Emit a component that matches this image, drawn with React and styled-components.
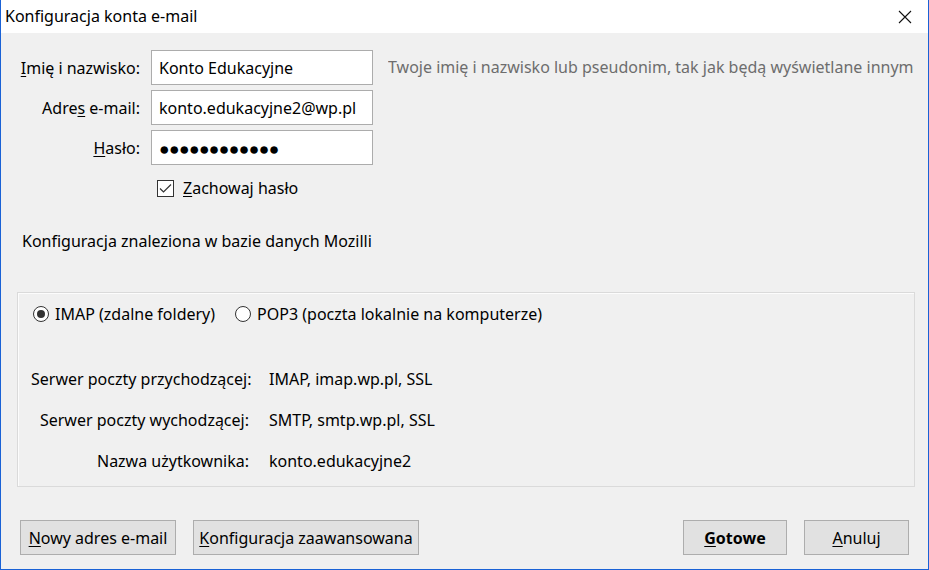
import React from "react";
import styled, { createGlobalStyle } from "styled-components";

const GlobalStyle = createGlobalStyle`
  html, body { margin: 0; padding: 0; background: #f0f0f0; }
  * { box-sizing: border-box; }
`;

const Window = styled.div`
  width: 929px;
  height: 570px;
  display: flex;
  flex-direction: column;
  background: #f0f0f0;
  border: 1px solid #1a62d6;
  border-top: none;
  font-family: "Noto Sans", "Open Sans", sans-serif;
  font-size: 16px;
  color: #000;
`;

const TitleBar = styled.div`
  height: 33px;
  flex: 0 0 33px;
  background: #fff;
  display: flex;
  align-items: center;
  justify-content: space-between;
  padding: 0 16px 0 4px;
`;

const Title = styled.div`
  font-size: 16px;
  padding-bottom: 1px;
`;

const CloseButton = styled.div`
  width: 14px;
  height: 14px;
  display: flex;
  svg { display: block; }
`;

const Body = styled.div`
  flex: 1;
  display: flex;
  flex-direction: column;
  padding: 17px 15px 0 15px;
`;

const FormGrid = styled.div`
  display: grid;
  grid-template-columns: 124px 222px 1fr;
  column-gap: 11px;
  row-gap: 5px;
  align-items: center;
`;

const Label = styled.label`
  text-align: right;
  white-space: nowrap;
  u { text-decoration: underline; text-underline-offset: 2px; }
`;

const Input = styled.div`
  height: 35px;
  background: #fff;
  border: 1px solid #acacac;
  display: flex;
  align-items: center;
  padding: 0 7px;
  white-space: nowrap;
  overflow: hidden;
  font-size: ${(p) => (p.$password ? "17.5px" : "16px")};
  letter-spacing: ${(p) => (p.$password ? "-0.6px" : "0")};
`;

const Hint = styled.div`
  color: #6d6d6d;
  white-space: nowrap;
  overflow: hidden;
  margin-left: 4px;
  padding-bottom: 2px;
`;

const CheckRow = styled.div`
  display: flex;
  align-items: center;
  gap: 9px;
  margin: 12px 0 0 141px;
  u { text-underline-offset: 2px; }
`;

const CheckBox = styled.div`
  width: 17px;
  height: 17px;
  border: 1px solid #333;
  background: #fff;
  display: flex;
  align-items: center;
  justify-content: center;
`;

const Found = styled.div`
  margin: 31px 0 0 6px;
`;

const Group = styled.div`
  margin: 40px 0 0 1px;
  width: 898px;
  height: 195px;
  border: 1px solid #dadada;
  box-shadow: 1px 1px 0 #fcfcfc inset;
  display: flex;
  flex-direction: column;
  padding: 10px 0 0 15px;
`;

const RadioRow = styled.div`
  display: flex;
  align-items: center;
`;

const RadioOption = styled.div`
  display: flex;
  align-items: center;
  gap: 6px;
  margin-right: ${(p) => p.$gap || 0}px;
`;

const Radio = styled.div`
  width: 16px;
  height: 16px;
  border-radius: 50%;
  border: 1px solid #333;
  background: #fff;
  display: flex;
  align-items: center;
  justify-content: center;
  &::after {
    content: "";
    width: 8px;
    height: 8px;
    border-radius: 50%;
    background: ${(p) => (p.$checked ? "#333" : "transparent")};
  }
`;

const ServerGrid = styled.div`
  display: grid;
  grid-template-columns: 218px 1fr;
  column-gap: 20px;
  row-gap: 19px;
  margin-top: 43px;
  margin-left: -2px;
  line-height: 22px;
`;

const ServerLabel = styled.div`
  text-align: right;
  white-space: nowrap;
`;

const Footer = styled.div`
  display: flex;
  align-items: center;
  padding: 33px 4px 0 4px;
  gap: 17px;
`;

const Spacer = styled.div`
  flex: 1;
`;

const Button = styled.div`
  height: 35px;
  width: ${(p) => p.$w}px;
  background: #e1e1e1;
  border: 1px solid #adadad;
  display: flex;
  align-items: center;
  justify-content: center;
  font-weight: ${(p) => (p.$bold ? 700 : 400)};
  white-space: nowrap;
  u { text-underline-offset: 2px; }
`;

export default function App() {
  return (
    <>
      <GlobalStyle />
      <Window>
        <TitleBar>
          <Title>Konfiguracja konta e-mail</Title>
          <CloseButton>
            <svg width="14" height="14" viewBox="0 0 14 14">
              <path d="M1 1 L13 13 M13 1 L1 13" stroke="#111" strokeWidth="1.1" />
            </svg>
          </CloseButton>
        </TitleBar>
        <Body>
          <FormGrid>
            <Label>
              <u>I</u>mię i nazwisko:
            </Label>
            <Input>Konto Edukacyjne</Input>
            <Hint>Twoje imię i nazwisko lub pseudonim, tak jak będą wyświetlane innym</Hint>
            <Label>
              Adre<u>s</u> e-mail:
            </Label>
            <Input>konto.edukacyjne2@wp.pl</Input>
            <div />
            <Label>
              <u>H</u>asło:
            </Label>
            <Input $password>●●●●●●●●●●●●</Input>
            <div />
          </FormGrid>
          <CheckRow>
            <CheckBox>
              <svg width="13" height="11" viewBox="0 0 13 11">
                <path d="M1 5.5 L4.5 9 L12 1.5" fill="none" stroke="#333" strokeWidth="1.2" />
              </svg>
            </CheckBox>
            <span>
              <u>Z</u>achowaj hasło
            </span>
          </CheckRow>
          <Found>Konfiguracja znaleziona w bazie danych Mozilli</Found>
          <Group>
            <RadioRow>
              <RadioOption $gap={20}>
                <Radio $checked />
                <span>IMAP (zdalne foldery)</span>
              </RadioOption>
              <RadioOption>
                <Radio />
                <span>POP3 (poczta lokalnie na komputerze)</span>
              </RadioOption>
            </RadioRow>
            <ServerGrid>
              <ServerLabel>Serwer poczty przychodzącej:</ServerLabel>
              <div>IMAP, imap.wp.pl, SSL</div>
              <ServerLabel>Serwer poczty wychodzącej:</ServerLabel>
              <div>SMTP, smtp.wp.pl, SSL</div>
              <ServerLabel>Nazwa użytkownika:</ServerLabel>
              <div>konto.edukacyjne2</div>
            </ServerGrid>
          </Group>
          <Footer>
            <Button $w={156}>
              <span>
                <u>N</u>owy adres e-mail
              </span>
            </Button>
            <Button $w={226}>
              <span>
                <u>K</u>onfiguracja zaawansowana
              </span>
            </Button>
            <Spacer />
            <Button $w={104} $bold>
              <span>
                <u>G</u>otowe
              </span>
            </Button>
            <Button $w={105}>
              <span>
                <u>A</u>nuluj
              </span>
            </Button>
          </Footer>
        </Body>
      </Window>
    </>
  );
}
